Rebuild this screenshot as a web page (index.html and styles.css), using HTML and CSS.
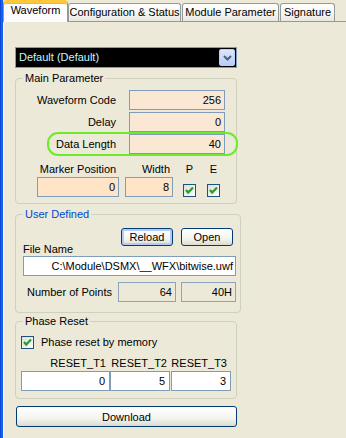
FILE: index.html
```html
<!DOCTYPE html>
<html>
<head>
<meta charset="utf-8">
<link rel="stylesheet" href="styles.css">
</head>
<body>
<div class="window">
  <div class="frame"></div>
  <div class="main">
    <div class="tabs">
      <div class="tab active t1">Waveform</div>
      <div class="tab t2">Configuration &amp; Status</div>
      <div class="tab t3">Module Parameter</div>
      <div class="tab t4">Signature</div>
    </div>
    <div class="page">
      <div class="combo">
        <span class="combo-text">Default (Default)</span>
        <span class="combo-btn">
          <svg width="9" height="6" viewBox="0 0 9 6"><polyline points="1,1 4.5,4.5 8,1" fill="none" stroke="#4D6185" stroke-width="2"/></svg>
        </span>
      </div>

      <fieldset class="group main-group">
        <legend>Main Parameter</legend>
        <div class="params">
          <div class="param"><span class="lbl">Waveform Code</span><div class="field peach">256</div></div>
          <div class="param"><span class="lbl">Delay</span><div class="field peach">0</div></div>
          <div class="param ringed"><span class="lbl">Data Length</span><div class="field peach">40</div></div>
        </div>
        <div class="marker">
          <span class="mh mh-pos">Marker Position</span>
          <span class="mh mh-width">Width</span>
          <span class="mh mh-box">P</span>
          <span class="mh mh-box">E</span>
          <div class="field peach2 mf-pos">0</div>
          <div class="field peach2 mf-width">8</div>
          <span class="chk mchk"><svg width="13" height="13" viewBox="0 0 13 13"><rect x="0.5" y="0.5" width="12" height="12" fill="url(#g)" stroke="#1C5180"/><polyline points="3,6 5.2,8.5 10,3.5" fill="none" stroke="#21A121" stroke-width="2.2"/></svg></span>
          <span class="chk mchk"><svg width="13" height="13" viewBox="0 0 13 13"><rect x="0.5" y="0.5" width="12" height="12" fill="url(#g)" stroke="#1C5180"/><polyline points="3,6 5.2,8.5 10,3.5" fill="none" stroke="#21A121" stroke-width="2.2"/></svg></span>
        </div>
      </fieldset>

      <fieldset class="group user-group">
        <legend class="blue">User Defined</legend>
        <div class="btn-row">
          <button class="btn focused">Reload</button>
          <button class="btn">Open</button>
        </div>
        <div class="fname-lbl">File Name</div>
        <div class="field white path">C:\Module\DSMX\__WFX\bitwise.uwf</div>
        <div class="points">
          <span class="points-lbl">Number of Points</span>
          <div class="field ro p1">64</div>
          <div class="field ro p2">40H</div>
        </div>
      </fieldset>

      <fieldset class="group phase-group">
        <legend>Phase Reset</legend>
        <div class="chk-row">
          <span class="chk"><svg width="13" height="13" viewBox="0 0 13 13"><rect x="0.5" y="0.5" width="12" height="12" fill="url(#g)" stroke="#1C5180"/><polyline points="3,6 5.2,8.5 10,3.5" fill="none" stroke="#21A121" stroke-width="2.2"/></svg></span>
          <span class="chk-lbl">Phase reset by memory</span>
        </div>
        <div class="resets">
          <span class="rh">RESET_T1</span>
          <span class="rh">RESET_T2</span>
          <span class="rh">RESET_T3</span>
          <div class="field white rf r1">0</div>
          <div class="field white rf r2">5</div>
          <div class="field white rf r3">3</div>
        </div>
      </fieldset>

      <button class="btn download">Download</button>
    </div>
  </div>
</div>
<svg width="0" height="0" class="defs"><defs><linearGradient id="g" x1="0" y1="0" x2="1" y2="1"><stop offset="0" stop-color="#DCDCD7"/><stop offset="1" stop-color="#FFFFFF"/></linearGradient></defs></svg>
</body>
</html>
```

FILE: styles.css
```css
*, *::before, *::after { box-sizing: border-box; }

body {
  margin: 0;
  font-family: "Liberation Sans", Arial, sans-serif;
  font-size: 11px;
  color: #000;
  background: #ECE9D8;
}

.window {
  display: flex;
  width: 346px;
  height: 438px;
  overflow: hidden;
}

.frame {
  flex: none;
  width: 3px;
  background: linear-gradient(to right, #0A3BD0, #1A6CF0 60%, #0F55E4);
}

.main {
  flex: 1;
  display: flex;
  flex-direction: column;
  background: #ECE9D8;
}

/* tabs */
.tabs {
  display: flex;
  align-items: flex-end;
  height: 22px;
  border-bottom: 1px solid #919B9C;
}

.tab {
  height: 18px;
  padding-top: 2px;
  border: 1px solid #919B9C;
  border-bottom: none;
  border-radius: 3px 3px 0 0;
  background: linear-gradient(#FFFFFF, #F7F6F2 55%, #E7E6DF);
  text-align: center;
  line-height: 13px;
  white-space: nowrap;
}

.tab.active {
  height: 22px;
  margin-bottom: -1px;
  padding-top: 1px;
  border-top: 3px solid #FFC83C;
  border-radius: 4px 4px 0 0;
  background: #FCFCFE;
  box-shadow: inset 0 1px 0 #F5B53B;
}

.t1 { width: 65px; }
.t2 { width: 113px; }
.t3 { width: 97px; margin-left: 1px; }
.t4 { width: 55px; margin-left: 1px; }

/* page */
.page {
  flex: 1;
  border-left: 1px solid #FBFBF8;
  padding: 25px 0 0 11px;
}

.combo {
  display: flex;
  align-items: center;
  width: 222px;
  height: 21px;
  padding: 1px;
  background: #000;
  border: 1px solid #7F9DB9;
}

.combo-text {
  flex: 1;
  padding-left: 2px;
  color: #C8F4FF;
  line-height: 17px;
}

.combo-btn {
  display: flex;
  align-items: center;
  justify-content: center;
  width: 16px;
  height: 17px;
  border: 1px solid #BCCFF6;
  border-radius: 2px;
  background: linear-gradient(#DCE6FD, #B9CDF7);
}

/* group boxes */
.group {
  margin: 0;
  padding: 0;
  min-width: 0;
  border: 1px solid #D0D0BF;
  border-radius: 4px;
}

.group legend {
  margin-left: 7px;
  padding: 0 2px;
  line-height: 13px;
}

.group legend.blue { color: #0046D5; }

.main-group {
  width: 222px;
  margin-top: 4px;
  padding-bottom: 6px;
}

.params {
  display: flex;
  flex-direction: column;
  gap: 2px;
  padding-top: 5px;
}

.param {
  position: relative;
  display: grid;
  grid-template-columns: 100px 96px;
  column-gap: 13px;
  align-items: center;
}

.lbl { text-align: right; }

.ringed::after {
  content: "";
  position: absolute;
  left: 31px;
  top: -2px;
  width: 191px;
  height: 24px;
  border: 2px solid #6CEB2A;
  border-radius: 11px;
}

.field {
  height: 20px;
  border: 1px solid #7F9DB9;
  text-align: right;
  padding-right: 3px;
  line-height: 18px;
  white-space: nowrap;
  overflow: hidden;
}

.peach { background: #FBE8D4; }
.peach2 { background: #FFE4C7; }
.white { background: #FFFFFF; }
.ro { background: #ECE9D8; border-color: #8EA4BD; }

.marker {
  display: grid;
  grid-template-columns: 82px 54px 23px 24px;
  grid-template-rows: 13px 20px;
  row-gap: 1px;
  margin: 9px 0 0 21px;
  line-height: 13px;
}

.mh-pos { text-align: center; }
.mh-width { text-align: right; padding-right: 3px; }
.mh-box { justify-self: end; width: 13px; text-align: center; }

.mf-width { justify-self: end; width: 48px; }

.chk {
  display: block;
  width: 13px;
  height: 13px;
}
.chk svg { display: block; }
.mchk { justify-self: end; align-self: end; }

/* user defined */
.user-group {
  width: 226px;
  margin-top: 4px;
  padding: 0 0 10px;
}

.btn-row {
  display: flex;
  justify-content: flex-end;
  gap: 8px;
  padding: 7px 7px 0 0;
}

.btn {
  font: inherit;
  color: #000;
  height: 18px;
  width: 52px;
  padding: 0;
  border: 1px solid #003C74;
  border-radius: 3px;
  background: linear-gradient(#FFFFFF, #F4F4EF 60%, #DEDAD0);
  line-height: 14px;
}

.btn.focused {
  box-shadow: inset 0 0 0 2px #B5CBF5;
}

.fname-lbl {
  margin: -3px 0 0 7px;
  line-height: 13px;
}

.path {
  width: 213px;
  margin-left: 7px;
  padding-right: 2px;
}

.points {
  display: flex;
  align-items: center;
  margin: 6px 0 0 11px;
}

.points-lbl { width: 91px; }
.p1 { width: 58px; }
.p2 { width: 55px; margin-left: 5px; }

/* phase reset */
.phase-group {
  width: 222px;
  margin-top: 2px;
  padding: 0 0 7px;
}

.chk-row {
  display: flex;
  align-items: center;
  gap: 7px;
  margin: 8px 0 0 5px;
  line-height: 13px;
}

.resets {
  display: grid;
  grid-template-columns: 89px 61px 60px;
  grid-template-rows: 13px 20px;
  row-gap: 1px;
  margin: 8px 0 0 5px;
  line-height: 13px;
}

.rh { text-align: right; padding-right: 4px; }
.rf { padding-right: 4px; }
.r2 { width: 60px; }

.download {
  display: block;
  width: 221px;
  height: 21px;
  margin: 7px 0 0 1px;
}

.defs { position: absolute; }
```
